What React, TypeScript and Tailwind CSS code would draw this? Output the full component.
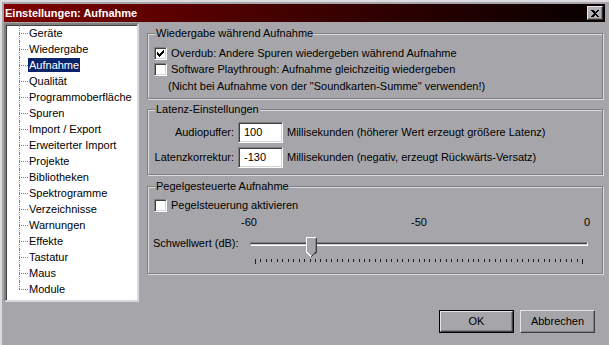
import React from 'react';

const items = [
  'Geräte',
  'Wiedergabe',
  'Aufnahme',
  'Qualität',
  'Programmoberfläche',
  'Spuren',
  'Import / Export',
  'Erweiterter Import',
  'Projekte',
  'Bibliotheken',
  'Spektrogramme',
  'Verzeichnisse',
  'Warnungen',
  'Effekte',
  'Tastatur',
  'Maus',
  'Module',
];

// classic 7x7 check glyph
const checkRows = ['......#', '.....##', '#...###', '##.###.', '#####..', '.###...', '..#....'];

const CheckBox = ({ checked }: { checked?: boolean }) => (
  <span className="w-[13px] h-[13px] shrink-0 bg-white border border-t-[#808080] border-l-[#808080] border-r-white border-b-white shadow-[inset_1px_1px_0_#404040,inset_-1px_-1px_0_#d4d4d8] flex items-center justify-center">
    {checked && (
      <svg width="7" height="7" viewBox="0 0 7 7" shapeRendering="crispEdges">
        {checkRows.map((row, y) =>
          row.split('').map((c, x) =>
            c === '#' ? <rect key={`${x}-${y}`} x={x} y={y} width="1" height="1" fill="#000" /> : null
          )
        )}
      </svg>
    )}
  </span>
);

const Group = ({ title, h, children }: { title: string; h: string; children: React.ReactNode }) => (
  <div
    className={`${h} border border-[#808080] shadow-[inset_1px_1px_0_#dcdce0,1px_1px_0_#dcdce0] flex flex-col`}
  >
    <span className="-mt-[8px] self-start ml-[7px] px-[1px] bg-[#a6a6aa] leading-[14px]">{title}</span>
    {children}
  </div>
);

const Field = ({ value }: { value: string }) => (
  <div className="w-[45px] h-[21px] shrink-0 bg-white border border-t-[#808080] border-l-[#808080] border-r-white border-b-white shadow-[inset_1px_1px_0_#404040,inset_-1px_-1px_0_#d4d4d8] pl-[5px] flex items-center">
    {value}
  </div>
);

const Button = ({ label, isDefault }: { label: string; isDefault?: boolean }) => (
  <div
    className={`w-[75px] h-[23px] flex items-center justify-center ${
      isDefault ? 'border border-black' : ''
    }`}
  >
    <div className="w-full h-full flex items-center justify-center border border-t-[#e4e4e8] border-l-[#e4e4e8] border-r-[#404040] border-b-[#404040] shadow-[inset_-1px_-1px_0_#808080]">
      {label}
    </div>
  </div>
);

const Slider = () => {
  const ticks = Array.from({ length: 61 }, (_, i) => Math.round(5 + (i * 327) / 60));
  return (
    <div className="w-[338px] flex flex-col">
      <div className="relative h-[21px]">
        <div className="mt-[6px] h-[4px] border-t border-l border-t-[#808080] border-l-[#808080] border-b border-r border-b-white border-r-white bg-[#404040] shadow-[inset_0_-1px_0_#d4d4d8]" />
        <svg className="absolute left-[56px] top-[1px]" width="11" height="20" viewBox="0 0 11 20" shapeRendering="crispEdges">
          <path d="M0.5 0.5H10.5V15L5.5 19.5L0.5 15Z" fill="#a6a6aa" />
          <path d="M0.5 15V0.5H10" fill="none" stroke="#ffffff" />
          <path d="M10.5 0.5V15L5.5 19.5" fill="none" stroke="#404040" />
          <path d="M9.5 1.5V14.6L5.5 18.3" fill="none" stroke="#808080" />
          <path d="M0.5 15L5 19.3" fill="none" stroke="#ffffff" />
        </svg>
      </div>
      <svg className="mt-[1px]" width="338" height="6" shapeRendering="crispEdges">
        {ticks.map((x, i) => (
          <rect key={i} x={x} y={1} width="1" height={i === 0 || i === 60 ? 5 : 3} fill="#202020" />
        ))}
      </svg>
    </div>
  );
};

const App = () => {
  return (
    <div className="w-[609px] h-[345px] overflow-hidden bg-[#a6a6aa] border-l-2 border-t-2 border-[#dcdce0] pl-[2px] pt-[2px] pr-[4px] flex flex-col text-[11px] text-black font-['Liberation_Sans',Arial,sans-serif]">
      {/* title bar */}
      <div className="h-[18px] shrink-0 bg-gradient-to-r from-[#800000] to-[#080000] flex items-center justify-between pl-[1px] pr-[2px]">
        <span className="text-white font-bold text-[11px] leading-[16px]">Einstellungen: Aufnahme</span>
        <div className="w-[16px] h-[14px] bg-[#b0b0b4] border border-t-[#e8e8ec] border-l-[#e8e8ec] border-r-[#303030] border-b-[#303030] shadow-[inset_-1px_-1px_0_#808080] flex items-center justify-center">
          <svg width="8" height="7" viewBox="0 0 8 7" shapeRendering="crispEdges">
            <path d="M0 0h2l2 2 2-2h2L5 3.5 8 7H6L4 5 2 7H0l3-3.5z" fill="#000" />
          </svg>
        </div>
      </div>

      {/* body */}
      <div className="flex pt-[1px]">
        <div className="w-[135px] h-[279px] shrink-0 bg-white border-2 border-t-[#808080] border-l-[#808080] border-r-[#d8d8dc] border-b-[#d8d8dc] shadow-[inset_1px_1px_0_#404040]">
          <div className="flex flex-col">
            {items.map((it, i) => (
              <div key={it} className="flex h-[16px] items-center">
                <div className="w-[13px] shrink-0" />
                <div className="w-[9px] h-[16px] shrink-0 flex flex-col">
                  <div className="h-[8px] border-l border-dotted border-[#808080]" />
                  <div
                    className={`h-[8px] border-t border-dotted border-[#808080] ${
                      i < items.length - 1 ? 'border-l' : ''
                    }`}
                  />
                </div>
                <span
                  className={`px-[1px] leading-[14px] ${
                    it === 'Aufnahme' ? 'bg-[#0a246a] text-white' : ''
                  }`}
                >
                  {it}
                </span>
              </div>
            ))}
          </div>
        </div>

        <div className="ml-[8px] w-[456px] mt-[10px] flex flex-col">
          <Group title="Wiedergabe während Aufnahme" h="h-[66px]">
            <div className="mt-[5px] pl-[6px] h-[16px] flex items-center gap-[4px]">
              <CheckBox checked />
              <span>Overdub: Andere Spuren wiedergeben während Aufnahme</span>
            </div>
            <div className="pl-[6px] h-[16px] flex items-center gap-[4px]">
              <CheckBox />
              <span>Software Playthrough: Aufnahme gleichzeitig wiedergeben</span>
            </div>
            <div className="mt-[1px] pl-[20px] h-[16px] flex items-center">
              (Nicht bei Aufnahme von der "Soundkarten-Summe" verwenden!)
            </div>
          </Group>

          <div className="mt-[10px]">
            <Group title="Latenz-Einstellungen" h="h-[66px]">
              <div className="mt-[6px] pl-[4px] h-[21px] flex items-center">
                <span className="w-[82px] text-right">Audiopuffer:</span>
                <div className="ml-[4px]">
                  <Field value="100" />
                </div>
                <span className="ml-[4px]">Millisekunden (höherer Wert erzeugt größere Latenz)</span>
              </div>
              <div className="mt-[4px] pl-[4px] h-[21px] flex items-center">
                <span className="w-[82px] text-right">Latenzkorrektur:</span>
                <div className="ml-[4px]">
                  <Field value="-130" />
                </div>
                <span className="ml-[4px]">Millisekunden (negativ, erzeugt Rückwärts-Versatz)</span>
              </div>
            </Group>
          </div>

          <div className="mt-[11px]">
            <Group title="Pegelgesteuerte Aufnahme" h="h-[88px]">
              <div className="mt-[4px] pl-[6px] h-[16px] flex items-center gap-[4px]">
                <CheckBox />
                <span>Pegelsteuerung aktivieren</span>
              </div>
              <div className="mt-[2px] h-[14px] flex items-center leading-[14px]">
                <span className="ml-[93px] w-[16px]">-60</span>
                <span className="ml-[154px] w-[16px]">-50</span>
                <span className="ml-[157px]">0</span>
              </div>
              <div className="mt-[7px] flex items-start">
                <span className="ml-[5px] mt-[0px] w-[97px] leading-[14px]">Schwellwert (dB):</span>
                <Slider />
              </div>
            </Group>
          </div>
        </div>
      </div>

      {/* footer */}
      <div className="mt-[8px] flex justify-end gap-[6px] pr-[10px]">
        <Button label="OK" isDefault />
        <Button label="Abbrechen" />
      </div>
    </div>
  );
};

export default App;
